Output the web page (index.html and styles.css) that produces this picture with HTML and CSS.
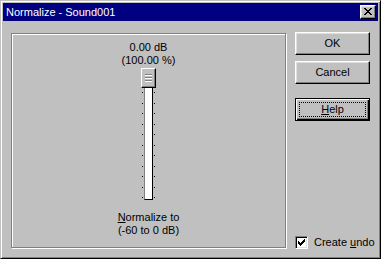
FILE: index.html
```html
<!DOCTYPE html>
<html lang="en">
<head>
    <meta charset="UTF-8">
    <meta name="viewport" content="width=device-width, initial-scale=1.0">
    <title>Normalize - Sound001</title>
    <link rel="stylesheet" href="styles.css">
</head>
<body>
    <div class="window">
        <div class="titlebar">
            <span class="title">Normalize - Sound001</span>
            <div class="close-btn">
                <svg width="8" height="7" viewBox="0 0 8 7" shape-rendering="crispEdges">
                    <path d="M0 0h2v1h-2zM6 0h2v1h-2zM1 1h2v1h-2zM5 1h2v1h-2zM2 2h4v1h-4zM3 3h2v1h-2zM2 4h4v1h-4zM1 5h2v1h-2zM5 5h2v1h-2zM0 6h2v1h-2zM6 6h2v1h-2z" fill="#000"/>
                </svg>
            </div>
        </div>

        <div class="dialog-body">
            <div class="group">
                <div class="readout">0.00 dB<br>(100.00 %)</div>
                <div class="slider">
                    <div class="ticks">
                        <span></span><span></span><span></span><span></span><span></span><span></span>
                        <span></span><span></span><span></span><span></span><span></span>
                    </div>
                    <div class="track"></div>
                    <div class="ticks">
                        <span></span><span></span><span></span><span></span><span></span><span></span>
                        <span></span><span></span><span></span><span></span><span></span>
                    </div>
                    <div class="thumb"></div>
                </div>
                <div class="caption"><u>N</u>ormalize to<br>(-60 to 0 dB)</div>
            </div>

            <div class="side">
                <div class="btn">OK</div>
                <div class="btn">Cancel</div>
                <div class="btn btn-default"><span><u>H</u>elp</span></div>
                <label class="check-row">
                    <span class="checkbox">
                        <svg width="7" height="7" viewBox="0 0 7 7" shape-rendering="crispEdges">
                            <path d="M6 0h1v3h-1zM5 1h1v3h-1zM4 2h1v3h-1zM0 2h1v3h-1zM1 3h1v3h-1zM3 3h1v3h-1zM2 4h1v3h-1z" fill="#000"/>
                        </svg>
                    </span>
                    <span class="check-label">Create <u>u</u>ndo</span>
                </label>
            </div>
        </div>
    </div>
</body>
</html>
```

FILE: styles.css
```css
body {
    margin: 0;
    background-color: #c0c0c0;
    font-family: "Liberation Sans", Arial, sans-serif;
    font-size: 11px;
    line-height: 13px;
    color: #000;
}

.window {
    width: 381px;
    height: 259px;
    box-sizing: border-box;
    border: 1px solid;
    border-color: #c0c0c0 #000 #000 #c0c0c0;
    box-shadow: inset 1px 1px #fff, inset -1px -1px #808080;
    padding: 2px;
    display: flex;
    flex-direction: column;
}

.titlebar {
    height: 18px;
    flex-shrink: 0;
    background-color: #000080;
    color: #fff;
    display: flex;
    align-items: center;
    justify-content: space-between;
    padding: 0 2px 0 3px;
}

.close-btn {
    width: 16px;
    height: 14px;
    box-sizing: border-box;
    border: 1px solid;
    border-color: #fff #000 #000 #fff;
    box-shadow: inset -1px -1px #808080, inset 1px 1px #dfdfdf;
    background-color: #c0c0c0;
    padding: 2px 0 0 3px;
}

.close-btn svg {
    display: block;
}

.dialog-body {
    flex: 1;
    display: flex;
    gap: 9px;
    padding: 12px 8px 8px 8px;
}

/* etched frame round the slider */
.group {
    width: 275px;
    flex-shrink: 0;
    box-sizing: border-box;
    border: 1px solid #808080;
    box-shadow: inset 1px 1px #fff, 1px 1px #fff;
    display: flex;
    flex-direction: column;
    align-items: center;
    padding-top: 7px;
}

.readout {
    text-align: center;
}

.slider {
    position: relative;
    margin-top: 1px;
    height: 132px;
    display: flex;
    gap: 1px;
}

.ticks {
    width: 1px;
    display: flex;
    flex-direction: column;
    justify-content: space-between;
    padding: 24px 0 2px;
}

.ticks span {
    height: 1px;
    background-color: #000;
}

.track {
    width: 9px;
    margin-top: 2px;
    box-sizing: border-box;
    border: 1px solid #000;
    border-left-color: #808080;
    background-color: #fff;
}

.thumb {
    position: absolute;
    left: -1px;
    top: 0;
    width: 15px;
    height: 20px;
    box-sizing: border-box;
    border: 1px solid;
    border-color: #fff #000 #000 #fff;
    box-shadow: inset -1px -1px #808080;
    background-color: #c0c0c0;
}

.thumb::before {
    content: "";
    position: absolute;
    left: 3px;
    top: 5px;
    width: 7px;
    height: 8px;
    background: repeating-linear-gradient(#808080 0 1px, #fff 1px 2px, #c0c0c0 2px 3px);
}

.caption {
    margin-top: 11px;
    text-align: center;
}

.side {
    width: 75px;
    flex-shrink: 0;
    margin-top: -1px;
    display: flex;
    flex-direction: column;
    gap: 6px;
}

.btn {
    height: 23px;
    box-sizing: border-box;
    border: 1px solid;
    border-color: #fff #000 #000 #fff;
    box-shadow: inset -1px -1px #808080, inset 1px 1px #dfdfdf;
    display: flex;
    align-items: center;
    justify-content: center;
}

.btn-default {
    margin-top: 8px;
    border-color: #000;
    box-shadow: inset 1px 1px #fff, inset -1px -1px #000, inset -2px -2px #808080;
    outline: 1px dotted #000;
    outline-offset: -5px;
}

.check-row {
    margin-top: auto;
    margin-bottom: -1px;
    display: flex;
    align-items: center;
    gap: 6px;
    white-space: nowrap;
}

.checkbox {
    width: 13px;
    height: 13px;
    flex-shrink: 0;
    box-sizing: border-box;
    border: 1px solid;
    border-color: #808080 #fff #fff #808080;
    box-shadow: inset 1px 1px #000, inset -1px -1px #dfdfdf;
    background-color: #fff;
    padding: 2px 0 0 2px;
}

.checkbox svg {
    display: block;
}
```
